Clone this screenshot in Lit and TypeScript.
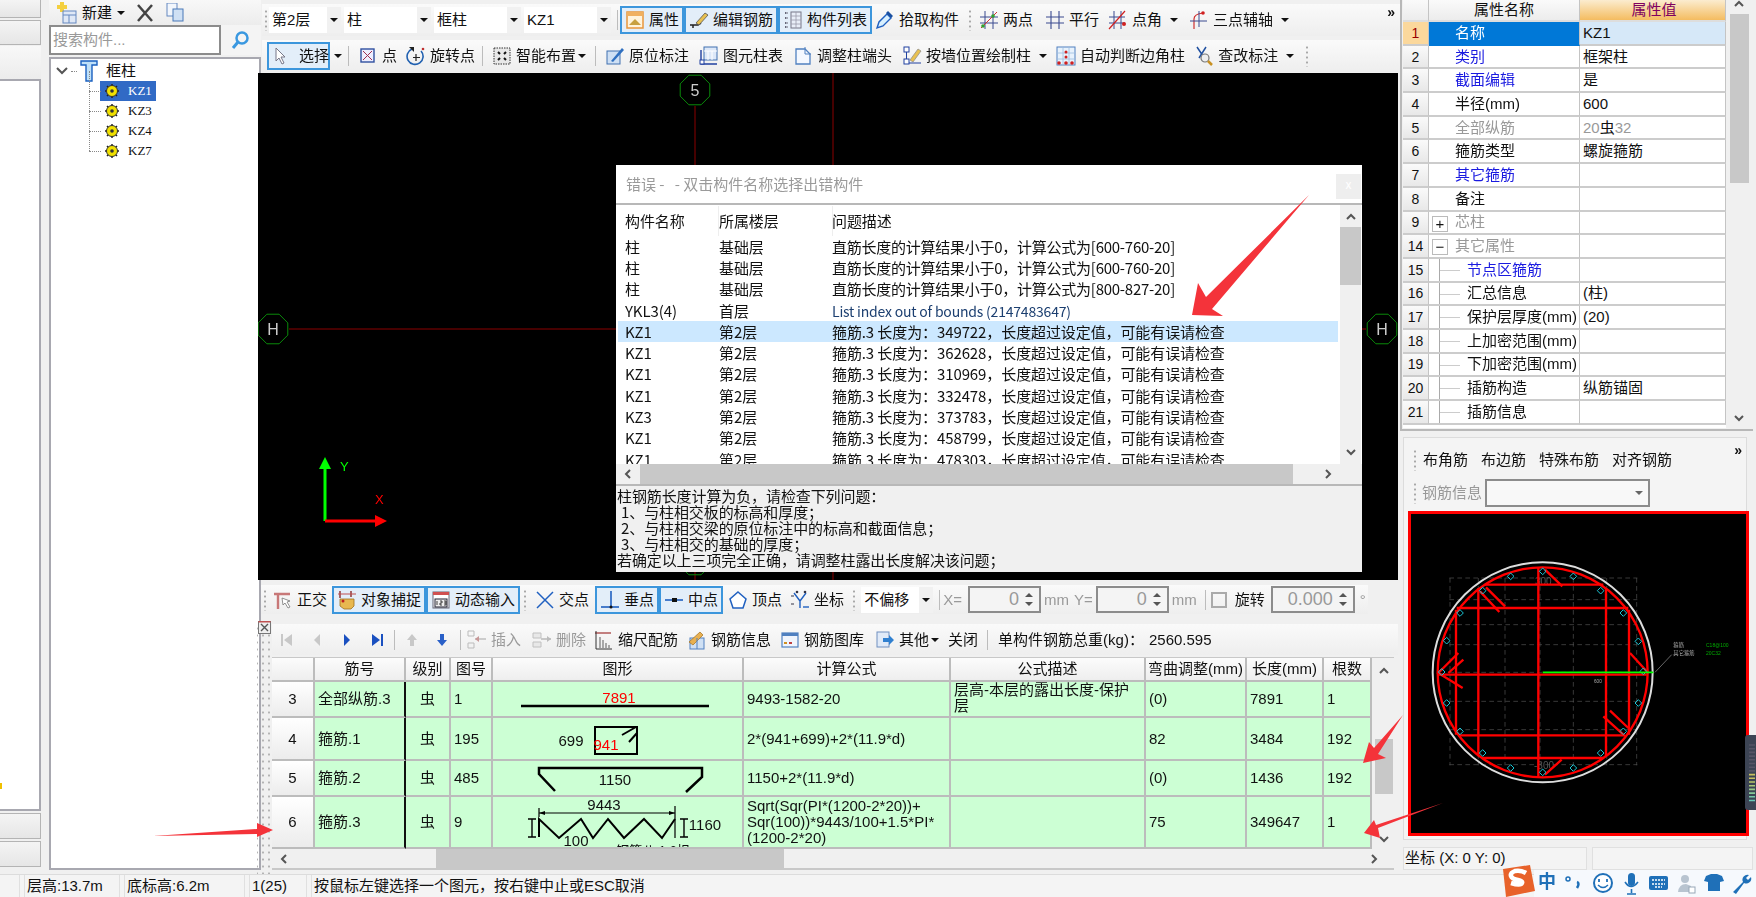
import { LitElement, html, css, svg, nothing } from "lit";
import { customElement } from "lit/decorators.js";

// toolbar icons, all on a 20x20 box
const ICONS: Record<string, unknown> = {
  attr: svg`<rect x="2" y="2" width="16" height="16" fill="#fff3dc" stroke="#e8963c" stroke-width="1.5"/><rect x="2" y="2" width="16" height="4" fill="#f0b060"/><path d="M4 15l6-6 6 6z" fill="#c8a040"/>`,
  edit: svg`<path d="M1 15h8l3-2" fill="none" stroke="#222" stroke-width="1.6"/><path d="M7 13L16 3l3 2-9 10z" fill="#e8c050" stroke="#555" stroke-width=".8"/><path d="M4 15v3" stroke="#222" stroke-width="1.5"/>`,
  list: svg`<path d="M2 3h3M2 8h3M2 13h3M2 17h3" stroke="#667" stroke-width="2" stroke-dasharray="1.5 1"/><rect x="8" y="2" width="10" height="16" fill="#e8eef8" stroke="#778"/><path d="M8 6h10M8 10h10M8 14h10M13 2v16" stroke="#99a" stroke-width=".8"/>`,
  pick: svg`<path d="M2 18l2-6 8-8 4 4-8 8z" fill="#d8f0ff" stroke="#2060c0" stroke-width="1.4"/><path d="M11 3l2-2 5 5-2 2z" fill="#1a50a0"/>`,
  twop: svg`<path d="M6 1v18M14 1v18M1 7h18M1 13h18" stroke="#3a4a90" stroke-width="1"/><path d="M2 18L18 2" stroke="#d03030"/><circle cx="4" cy="16" r="1.8" fill="#30a030"/><circle cx="14" cy="6" r="1.8" fill="#30a030"/>`,
  par: svg`<path d="M6 1v18M14 1v18M1 7h18M1 13h18" stroke="#3a4a90" stroke-width="1.1"/>`,
  angle: svg`<path d="M6 1v18M13 1v18M1 7h16M1 13h16" stroke="#3a4a90"/><path d="M1 19L17 1" stroke="#d02020" stroke-width="1.2"/><circle cx="16" cy="14" r="2" fill="#d02020"/>`,
  tri: svg`<path d="M5 19V9q0-5 9-6" fill="none" stroke="#d03030" stroke-width="1.2"/><path d="M10 1v16M1 11h17" stroke="#3a4a90"/><circle cx="14" cy="3" r="1.8" fill="#d02020"/>`,
  cursor: svg`<path d="M5 2v13l3-3 3 6 2-1-3-6h4z" fill="#fff" stroke="#778" stroke-width="1"/>`,
  point: svg`<rect x="3" y="3" width="13" height="13" fill="#eef" stroke="#3050a0" stroke-width="1.4"/><path d="M5 5l9 9M14 5l-9 9" stroke="#a03050"/>`,
  rot: svg`<path d="M6 3a8 8 0 1 0 9 2" fill="none" stroke="#2060b0" stroke-width="1.6"/><path d="M3 1h5v5z" fill="#222"/><path d="M10 8v7M7 11.500h7" stroke="#222" stroke-width="1.2"/><circle cx="17" cy="3" r="1.300" fill="#c03030"/>`,
  smart: svg`<rect x="2" y="2" width="16" height="16" fill="#e8e8e8" stroke="#333" stroke-dasharray="1.500 1"/><path d="M6 6l2 2M14 6l-2 2M6 14l2-2M14 14l-2-2" stroke="#111" stroke-width="2"/>`,
  mark: svg`<rect x="2" y="5" width="13" height="13" fill="#cfe0f4" stroke="#4070b0"/><path d="M6 15L17 2l2 2L8 16z" fill="#3070c0"/>`,
  table: svg`<rect x="5" y="1" width="13" height="13" fill="#dde8f8" stroke="#4070b0"/><path d="M5 5h13M9 5v9M13 5v9" stroke="#fff"/><path d="M2 4v14h16" fill="none" stroke="#2040a0" stroke-width="1.400"/><rect x="1" y="14" width="4" height="4" fill="#fff" stroke="#2040a0"/>`,
  adjust: svg`<path d="M3 3h9l5 5v10H3z" fill="#f4f8ff" stroke="#5080c0" stroke-width="1.300"/><path d="M12 1v7h6" fill="none" stroke="#5080c0"/>`,
  wall: svg`<rect x="2" y="1" width="5" height="5" fill="#fff" stroke="#2040a0"/><rect x="2" y="13" width="5" height="5" fill="#fff" stroke="#2040a0"/><path d="M4.500 6v7M7 17h12" stroke="#2040a0"/><path d="M8 14L16 3l3 2-8 11z" fill="#e8c050" stroke="#888" stroke-width=".7"/>`,
  auto: svg`<rect x="1" y="1" width="18" height="18" fill="#e8f2fc" stroke="#5080c0"/><path d="M7 1v18M13 1v18M1 7h18M1 13h18" stroke="#9dbde0" stroke-width=".8"/><circle cx="10" cy="6" r="1.500" fill="#d02020"/><circle cx="10" cy="11" r="1.500" fill="#d02020"/><circle cx="3" cy="17" r="1.800" fill="#d02020"/><circle cx="10" cy="17" r="1.800" fill="#d02020"/><circle cx="16" cy="17" r="1.800" fill="#d02020"/>`,
  check: svg`<path d="M3 1l6 9M12 1L5 12" stroke="#2050a0" stroke-width="1.500"/><circle cx="11" cy="12" r="4" fill="#eee" stroke="#777" stroke-width="1.200"/><path d="M14 15l4 4" stroke="#c89020" stroke-width="2.500"/>`,
  ortho: svg`<path d="M1 4h16M5 4v15" stroke="#c87878" stroke-width="2.400"/><path d="M9 8l8 3-3 1 3 5-2 1-3-5-2 2z" fill="#fff" stroke="#777" stroke-width=".8"/>`,
  snap: svg`<path d="M3 1v7M14 1v6" stroke="#8a2a2a" stroke-width="1.400"/><path d="M1 4l18 0" stroke="#c05050"/><path d="M3 9h14v7l-3 3H7l-4-3z" fill="#e8b850" stroke="#a07020" stroke-width=".8"/><circle cx="6" cy="11" r="1.500" fill="#c02020"/>`,
  dyn: svg`<rect x="2" y="2" width="16" height="16" fill="#fff" stroke="#667"/><rect x="2" y="2" width="16" height="3" fill="#d05050"/><rect x="4" y="9" width="12" height="8" fill="#eee" stroke="#223"/><path d="M6 11v4M9 11h2v2H9v2h2M13 11h2v4h-2M13 13h2" fill="none" stroke="#111" stroke-width=".8"/>`,
  cross: svg`<path d="M2 2l16 16M18 2L2 18" stroke="#2060c0" stroke-width="1.500"/>`,
  perp: svg`<path d="M1 17h18" stroke="#2060c0" stroke-width="1.600"/><path d="M11 1v16" stroke="#2060c0" stroke-width="1.600"/><circle cx="11" cy="17" r="1.500" fill="#111"/>`,
  mid: svg`<path d="M1 10h18" stroke="#2060c0" stroke-width="1.600"/><rect x="8" y="8" width="5" height="4" fill="#111"/>`,
  vertex: svg`<path d="M10 2l8 7-3 9H5L2 9z" fill="#fff" stroke="#2060c0" stroke-width="1.500"/>`,
  coord: svg`<path d="M4 3l6 8 6-8M10 11v7" fill="none" stroke="#2060c0" stroke-width="1.400"/><circle cx="7" cy="2" r="1.300" fill="#334"/><circle cx="15" cy="2" r="1.300" fill="#334"/><path d="M1 6h3M1 14h3" stroke="#334"/><path d="M13 17h6" stroke="#2060c0" stroke-width="1.400"/>`,
  ins: svg`<path d="M1 1h6v5H1zM1 13h6v5H1z" fill="none" stroke="#bbb"/><path d="M8 9h11" stroke="#bbb" stroke-width="1.400"/><path d="M8 9l4-3v6z" fill="#c89898"/>`,
  del: svg`<path d="M1 3h8v5H1zM1 12h8v5H1z" fill="#e8e8e8" stroke="#c0c0c0"/><path d="M9 9h10" stroke="#bbb" stroke-width="1.600"/><path d="M19 9l-4-3v6z" fill="#bbb"/>`,
  scale: svg`<path d="M1 3h16" stroke="#a03030" stroke-width="1.200"/><path d="M2 1v18h16" fill="none" stroke="#333"/><path d="M6 7v11M9 10v8M12 13v5M15 15v3" stroke="#888" stroke-width="1.400"/>`,
  info: svg`<rect x="3" y="8" width="14" height="11" fill="#cfe0f4" stroke="#5080c0"/><path d="M2 12L13 2l3 3L6 15z" fill="#e8b050" stroke="#a07020" stroke-width=".7"/><path d="M10 8v11" stroke="#5080c0"/>`,
  lib: svg`<rect x="2" y="3" width="16" height="14" fill="#f0f4fc" stroke="#5080c0" stroke-width="1.200"/><rect x="2" y="3" width="16" height="3" fill="#5080c0"/><path d="M4 13h3" stroke="#d09020" stroke-width="2"/><path d="M9 13h3" stroke="#c04040" stroke-width="2"/>`,
  other: svg`<rect x="2" y="2" width="12" height="15" fill="#e0eaf8" stroke="#7090c0"/><path d="M8 8h6V5l5 5-5 5v-3H8z" fill="#3080d0"/>`,
};

const icon = (name: string) =>
  html`<svg class="ic" width="20" height="20" viewBox="0 0 20 20">${ICONS[name]}</svg>`;

const chevron = (dir: "up" | "down" | "left" | "right") => {
  const d = {
    up: "M2 8l4-4 4 4",
    down: "M2 4l4 4 4-4",
    left: "M8 2L4 6l4 4",
    right: "M4 2l4 4-4 4",
  }[dir];
  return html`<svg class="chev" width="12" height="12" viewBox="0 0 12 12">
    <path d=${d} fill="none" stroke="#555" stroke-width="2" />
  </svg>`;
};

type Tool = { label: string; ic?: string; on?: boolean; arrow?: boolean; off?: boolean; cls?: string };

const tool = (t: Tool) => html`
  <span class="tool ${t.on ? "on" : ""} ${t.off ? "off" : ""} ${t.cls ?? ""}">
    ${t.ic ? icon(t.ic) : nothing}<span>${t.label}</span>
    ${t.arrow ? html`<i class="caret"></i>` : nothing}
  </span>
`;

const ROW1_A: Tool[] = [
  { label: "属性", ic: "attr", on: true },
  { label: "编辑钢筋", ic: "edit", on: true },
  { label: "构件列表", ic: "list", on: true },
  { label: "拾取构件", ic: "pick" },
];
const ROW1_B: Tool[] = [
  { label: "两点", ic: "twop", cls: "mr6" },
  { label: "平行", ic: "par", cls: "mr3" },
  { label: "点角", ic: "angle", arrow: true, cls: "mr5" },
  { label: "三点辅轴", ic: "tri", arrow: true },
];
const ROW2_B: Tool[] = [
  { label: "原位标注", ic: "mark", cls: "mr4" },
  { label: "图元柱表", ic: "table", cls: "mr4" },
  { label: "调整柱端头", ic: "adjust", cls: "mr4" },
  { label: "按墙位置绘制柱", ic: "wall", arrow: true, cls: "mr3" },
  { label: "自动判断边角柱", ic: "auto", cls: "mr3" },
  { label: "查改标注", ic: "check", arrow: true },
];

const DIALOG_TOP = [
  ["柱", "基础层", "直筋长度的计算结果小于0，计算公式为[600-760-20]"],
  ["柱", "基础层", "直筋长度的计算结果小于0，计算公式为[600-760-20]"],
  ["柱", "基础层", "直筋长度的计算结果小于0，计算公式为[800-827-20]"],
  ["YKL3(4)", "首层", "List index out of bounds (2147483647)"],
];
const DIALOG_LEN: [string, string][] = [
  ["KZ1", "349722"],
  ["KZ1", "362628"],
  ["KZ1", "310969"],
  ["KZ1", "332478"],
  ["KZ3", "373783"],
  ["KZ1", "458799"],
  ["KZ1", "478303"],
];

type Prop = { n: number; name: string; val?: string; kind?: string; sub?: boolean; expander?: string };
const PROPS: Prop[] = [
  { n: 1, name: "名称", val: "KZ1" },
  { n: 2, name: "类别", val: "框架柱", kind: "blue" },
  { n: 3, name: "截面编辑", val: "是", kind: "blue" },
  { n: 4, name: "半径(mm)", val: "600" },
  { n: 5, name: "全部纵筋", val: "20虫32", kind: "grey" },
  { n: 6, name: "箍筋类型", val: "螺旋箍筋" },
  { n: 7, name: "其它箍筋", kind: "blue" },
  { n: 8, name: "备注" },
  { n: 9, name: "芯柱", kind: "grey", expander: "+" },
  { n: 14, name: "其它属性", kind: "grey", expander: "−" },
  { n: 15, name: "节点区箍筋", kind: "blue", sub: true },
  { n: 16, name: "汇总信息", val: "(柱)", sub: true },
  { n: 17, name: "保护层厚度(mm)", val: "(20)", sub: true },
  { n: 18, name: "上加密范围(mm)", sub: true },
  { n: 19, name: "下加密范围(mm)", sub: true },
  { n: 20, name: "插筋构造", val: "纵筋锚固", sub: true },
  { n: 21, name: "插筋信息", sub: true },
];

const HEADS = ["", "筋号", "级别", "图号", "图形", "计算公式", "公式描述", "弯曲调整(mm)", "长度(mm)", "根数"];

const shape3 = svg`<text x="126" y="21" class="red" text-anchor="middle">7891</text><path d="M28 24h188" stroke="#000" stroke-width="2.500"/>`;
const shape4 = svg`<text x="78" y="28" text-anchor="middle">699</text><rect x="102" y="9" width="42" height="27" fill="none" stroke="#000" stroke-width="2"/><path d="M129 17l14-8M136 24l8-9" stroke="#000" stroke-width="2"/><text x="113" y="32" class="red" text-anchor="middle">941</text>`;
const shape5 = svg`<path d="M62 30L46 13V7h163v9l-16 15" fill="none" stroke="#000" stroke-width="2.500"/><text x="122" y="24" text-anchor="middle">1150</text>`;
const shape6 = svg`<text x="111" y="13" text-anchor="middle">9443</text>
  <path d="M46 16h136M46 11v9M182 9v32" stroke="#000" stroke-width="1.200"/>
  <path d="M46 16l6-2v4zM182 16l-6-2v4z" fill="#000"/>
  <path d="M46 40V22l20 19 22-19 12 19 15-19 16 19 20-19 18 19 13-19" fill="none" stroke="#000" stroke-width="2"/>
  <path d="M39 22v18M35 22h8M35 40h8M191 22v18M187 22h8M187 40h8" stroke="#000" stroke-width="1.400"/>
  <text x="212" y="33" text-anchor="middle">1160</text>
  <text x="83" y="49" text-anchor="middle">100</text>
  <text x="160" y="58" text-anchor="middle" class="small">钢筋八 1.6扣</text>`;

const ROWS = [
  { n: "3", no: "全部纵筋.3", fig: "1", shape: shape3, calc: ["9493-1582-20"], desc: "层高-本层的露出长度-保护层", bend: "(0)", len: "7891", cnt: "1" },
  { n: "4", no: "箍筋.1", fig: "195", shape: shape4, calc: ["2*(941+699)+2*(11.9*d)"], desc: "", bend: "82", len: "3484", cnt: "192" },
  { n: "5", no: "箍筋.2", fig: "485", shape: shape5, calc: ["1150+2*(11.9*d)"], desc: "", bend: "(0)", len: "1436", cnt: "192" },
  { n: "6", no: "箍筋.3", fig: "9", shape: shape6, calc: ["Sqrt(Sqr(PI*(1200-2*20))+", "Sqr(100))*9443/100+1.5*PI*", "(1200-2*20)"], desc: "", bend: "75", len: "349647", cnt: "1" },
];

const DIAMONDS = [
  [458, 430], [550, 445], [632, 488], [700, 555], [745, 640], [760, 730], [745, 825], [700, 910], [632, 975], [550, 1020],
  [458, 1033], [362, 1020], [278, 975], [210, 910], [170, 825], [155, 732], [170, 638], [210, 555], [278, 488], [362, 445],
];

const GADGET_BARS = ["#556", "#556", "#556", "#556", "#556", "#556", "#556", "#556", "#c8c060", "#c8c060", "#b8c868", "#a8c878", "#98c888", "#88c898", "#78c8a8", "#68c8b8"];

@customElement("app-root")
export class AppRoot extends LitElement {
  static styles = css`
    :host {
      display: block;
      position: relative;
      width: 1756px;
      height: 897px;
      overflow: hidden;
      background: #f0f0f0;
      color: #111;
      font: 15px/20px "Liberation Sans", "Noto Sans CJK SC", sans-serif;
      white-space: nowrap;
    }
    .root {
      height: 100%;
      display: flex;
      flex-direction: column;
      filter: blur(0.45px);
    }
    .main {
      height: 874px;
      display: flex;
    }
    svg {
      display: block;
      flex: none;
    }
    .mr1 { margin-right: 1px; }
    .mr2 { margin-right: 2px; }
    .mr3 { margin-right: 3px; }
    .mr4 { margin-right: 4px; }
    .mr5 { margin-right: 5px; }
    .mr6 { margin-right: 6px; }
    .mr8 { margin-right: 8px; }
    .ml2 { margin-left: 2px; }
    .ml3 { margin-left: 3px; }
    .ml4 { margin-left: 4px; }
    .ml5 { margin-left: 5px; }
    .ml6 { margin-left: 6px; }
    .ml8 { margin-left: 8px; }

    /* left strip */
    .left {
      width: 41px;
      display: flex;
      flex-direction: column;
      flex: none;
    }
    .strip-btn {
      background: linear-gradient(#f4f4f4, #e6e6e6);
      border: 1px solid #b4b4b4;
      border-left: 0;
      box-sizing: border-box;
      height: 26px;
      margin-bottom: 2px;
      flex: none;
    }
    .strip-btn.top {
      height: 18px;
      border-top: 0;
    }
    .strip-btn.mid {
      height: 25px;
    }
    .strip-fill {
      height: 33px;
      flex: none;
      background: linear-gradient(#f8f8f8, #ececec);
      margin-top: -1px;
    }
    .strip-white {
      height: 732px;
      margin-bottom: 2px;
      background: #fff;
      border: 2px solid #a8a8b0;
      border-left: 0;
      box-sizing: border-box;
      position: relative;
      flex: none;
    }
    .tick {
      position: absolute;
      left: 0;
      top: 702px;
      width: 2px;
      height: 6px;
      background: #f0c000;
    }

    /* component tree */
    .treecol {
      width: 212px;
      margin-left: 8px;
      flex: none;
      display: flex;
      flex-direction: column;
    }
    .treebar {
      height: 25px;
      display: flex;
      align-items: center;
      padding-left: 6px;
      gap: 5px;
      background: linear-gradient(#f8f8f8, #ececec);
    }
    .treebar .caret {
      margin-left: 0;
    }
    .search {
      height: 30px;
      display: flex;
      margin-bottom: 2px;
    }
    .searchbox {
      width: 172px;
      border: 2px solid #8c8c8c;
      background: #fff;
      color: #999;
      padding: 3px 2px;
      box-sizing: border-box;
    }
    .go {
      flex: 1;
      display: flex;
      align-items: center;
      justify-content: center;
      background: #f4f4f4;
    }
    .tree {
      height: 813px;
      background: #fff;
      border: 2px solid #a8a8b0;
      box-sizing: border-box;
      padding: 2px 0 0 5px;
      position: relative;
    }
    .tree-head {
      display: flex;
      align-items: center;
      height: 20px;
      gap: 3px;
    }
    .dots {
      width: 6px;
      border-top: 1px dotted #888;
    }
    .tree-head .name {
      margin-left: 5px;
    }
    .tree-item {
      display: flex;
      align-items: center;
      height: 20px;
      font: 13px/20px "Liberation Serif", serif;
      margin-left: 33px;
      padding-left: 20px;
      position: relative;
    }
    .tree-item::before {
      content: "";
      position: absolute;
      left: 0;
      top: -10px;
      height: 20px;
      border-left: 1px dotted #888;
    }
    .tree-item::after {
      content: "";
      position: absolute;
      left: 0;
      width: 12px;
      top: 10px;
      border-top: 1px dotted #888;
    }
    .leaf {
      display: flex;
      align-items: center;
      gap: 8px;
      height: 20px;
      width: 56px;
      margin-left: -9px;
      padding-left: 4px;
      box-sizing: border-box;
    }
    .leaf.sel {
      background: #316ac5;
      color: #fff;
    }

    /* centre column */
    .centre {
      width: 1143px;
      flex: none;
      margin-left: -4px;
      display: flex;
      flex-direction: column;
    }
    .bars {
      height: 73px;
      padding-left: 5px;
      position: relative;
    }
    .bar {
      display: flex;
      align-items: center;
      height: 32px;
      background: linear-gradient(#fafafa, #eeeeee);
    }
    .bar.one {
      margin-top: 4px;
    }
    .bar.two {
      margin-top: 4px;
      padding-left: 5px;
    }
    .grip {
      width: 4px;
      height: 22px;
      flex: none;
      background: radial-gradient(circle, #a8a8a8 1px, transparent 1.2px) 0 0 / 4px 5px;
    }
    .sep {
      width: 1px;
      height: 20px;
      background: #bcbcbc;
      flex: none;
    }
    .tool {
      display: inline-flex;
      align-items: center;
      gap: 4px;
      height: 28px;
      padding: 0 3px;
      box-sizing: border-box;
      flex: none;
    }
    .tool.on {
      background: #e3eef9;
      border: 2px solid #3c96dc;
      padding: 0 3px;
    }
    .tool.sel-wide {
      width: 63px;
      gap: 8px;
      padding: 0 2px;
    }
    .tool.off {
      color: #9a9a9a;
    }
    .caret {
      width: 0;
      height: 0;
      margin-left: 4px;
      border-left: 4px solid transparent;
      border-right: 4px solid transparent;
      border-top: 4px solid #111;
      flex: none;
    }
    .tool.tight .caret {
      margin-left: -2px;
    }
    .dd {
      width: 87px;
      height: 26px;
      background: #fff;
      display: flex;
      align-items: center;
      padding-left: 3px;
      box-sizing: border-box;
      margin-left: 3px;
      position: relative;
      flex: none;
    }
    .dd.s {
      width: 72px;
      margin-left: 0;
    }
    .dd .caret {
      position: absolute;
      right: 3px;
      top: 11px;
      margin: 0;
      z-index: 1;
    }
    .dd::after {
      content: "";
      position: absolute;
      right: 0;
      top: 0;
      bottom: 0;
      width: 14px;
      background: #f1f1f1;
      z-index: 0;
    }
    .more {
      position: absolute;
      right: 5px;
      top: 2px;
      font: bold 14px/20px "Liberation Sans", sans-serif;
    }

    /* main drawing */
    .canvas {
      height: 507px;
      width: 1140px;
      margin-left: 1px;
      background: #000;
      position: relative;
      flex: none;
    }
    .canvas > svg {
      position: absolute;
      inset: 0;
    }

    /* error dialog on the canvas */
    .dialog {
      position: absolute;
      left: 358px;
      top: 92px;
      width: 746px;
      height: 407px;
      background: #fff;
      display: flex;
      flex-direction: column;
      box-sizing: border-box;
    }
    .dlg-title {
      height: 38px;
      flex: none;
      color: #9a9a9a;
      display: flex;
      align-items: center;
      padding-left: 10px;
      border-bottom: 2px solid #b8b8b8;
      position: relative;
      font-family: "Noto Sans CJK SC", sans-serif;
      white-space: pre;
    }
    .dlg-x {
      position: absolute;
      right: 1px;
      top: 9px;
      width: 25px;
      height: 25px;
      background: #eeeeee;
      color: #fff;
      text-align: center;
      font-size: 12px;
    }
    .dlg-body {
      flex: none;
      height: 259px;
      display: flex;
    }
    .dlg-list {
      width: 724px;
      overflow: hidden;
      padding-left: 2px;
      box-sizing: border-box;
    }
    .dlg-row {
      display: grid;
      grid-template-columns: 94px 114px 1fr;
      height: 21.3px;
      align-items: center;
      padding-left: 7px;
      font-family: "Noto Sans CJK SC", "Liberation Sans", sans-serif;
      letter-spacing: -0.1px;
    }
    .dlg-row.head {
      height: 31px;
    }
    .dlg-row.sel {
      background: #cce8ff;
      margin-right: 2px;
    }
    .dlg-row.dense > :nth-child(3) {
      letter-spacing: -0.25px;
    }
    .dlg-row.small > :nth-child(3) {
      color: #1c3f70;
      font-size: 14px;
      letter-spacing: -0.2px;
    }
    .dlg-row > :nth-child(3) {
      margin-left: -1px;
    }
    .headcell {
      border-right: 1px solid #eee;
      height: 30px;
      line-height: 30px;
    }
    .vscroll {
      width: 21px;
      flex: none;
      background: #f0f0f0;
      display: flex;
      flex-direction: column;
      align-items: center;
      position: relative;
      padding-top: 6px;
      box-sizing: border-box;
    }
    .vscroll .thumb {
      width: 100%;
      height: 58px;
      background: #c8c8c8;
      margin-top: 4px;
    }
    .vscroll .chev:last-child {
      position: absolute;
      bottom: 6px;
    }
    .dlg-h {
      height: 20px;
      flex: none;
      background: #f0f0f0;
      display: flex;
      align-items: center;
      padding: 0 6px;
      gap: 6px;
    }
    .dlg-h .thumb {
      width: 653px;
      height: 100%;
      background: #c8c8c8;
    }
    .dlg-h .chev:last-child {
      margin-left: 23px;
    }
    .dlg-desc {
      flex: 1;
      background: #f0f0f0;
      border-top: 2px solid #b8b8b8;
      padding: 2px 0 0 1px;
      font: 15px/16px "Noto Sans CJK SC", sans-serif;
      overflow: hidden;
      letter-spacing: -0.1px;
    }
    .dlg-desc div:nth-child(n + 2):nth-child(-n + 4) {
      padding-left: 4px;
    }

    /* snap toolbar */
    .snapbar {
      height: 29px;
      margin: 5px 0 0 3px;
      display: flex;
      align-items: center;
      background: linear-gradient(#fafafa, #eeeeee);
      font-size: 15px;
      width: 1108px;
    }
    .spin {
      width: 73px;
      height: 27px;
      border: 2px solid #8c8c8c;
      box-sizing: border-box;
      color: #999;
      font-size: 18px;
      text-align: right;
      padding: 1px 20px 0 0;
      position: relative;
      background: #f4f4f4;
      flex: none;
    }
    .spin.w {
      width: 84px;
    }
    .spin::after {
      content: "";
      position: absolute;
      right: 6px;
      top: 5px;
      border-left: 4px solid transparent;
      border-right: 4px solid transparent;
      border-bottom: 4px solid #555;
    }
    .spin::before {
      content: "";
      position: absolute;
      right: 6px;
      bottom: 5px;
      border-left: 4px solid transparent;
      border-right: 4px solid transparent;
      border-top: 4px solid #555;
    }
    .muted {
      color: #9a9a9a;
      flex: none;
    }
    .cb {
      width: 12px;
      height: 12px;
      border: 2px solid #aaa;
      flex: none;
    }

    /* rebar table */
    .lower {
      flex: 1;
      display: flex;
      margin-top: 10px;
      min-height: 0;
    }
    .gutter {
      width: 15px;
      flex: none;
      position: relative;
      background: radial-gradient(circle, #b4b4b4 1px, transparent 1.2px) 3px 15px / 6px 7px;
    }
    .closer {
      position: absolute;
      left: 1px;
      top: -3px;
    }
    .grid-wrap {
      width: 1126px;
      flex: none;
      display: flex;
      flex-direction: column;
    }
    .tbar {
      height: 31px;
      display: flex;
      align-items: center;
      background: linear-gradient(#fafafa, #eeeeee);
      flex: none;
    }
    .nav {
      width: 30px;
      height: 20px;
      display: flex;
      align-items: center;
      justify-content: center;
      flex: none;
    }
    .table-box {
      margin-top: 2px;
      flex: none;
      display: flex;
      height: 191px;
      border-top: 1px solid #c8c8c8;
      width: 1122px;
    }
    .rb {
      display: grid;
      grid-template-columns: 43px 91px 45px 42px 251px 207px 195px 101px 77px 48px;
      grid-template-rows: 24px 36px 43px 36px 52px;
      width: 1100px;
      height: 191px;
      overflow: hidden;
      flex: none;
      background: #ccffd4;
    }
    .rb > div {
      border-right: 2px solid #bcbcbc;
      border-bottom: 2px solid #bcbcbc;
      box-sizing: border-box;
      padding-left: 3px;
      display: flex;
      align-items: center;
      overflow: hidden;
      font-size: 15px;
      min-width: 0;
    }
    .rb .hd {
      background: linear-gradient(#fcfcfc, #eeeeee);
      justify-content: center;
      padding: 0;
    }
    .rb .idx {
      background: linear-gradient(#fff, #ececec);
      justify-content: center;
      padding: 0;
    }
    .rb .no {
      border-right: 2px solid #111;
    }
    .rb .sym {
      justify-content: center;
      padding: 0;
    }
    .rb .shape {
      padding: 0;
      align-items: flex-start;
    }
    .rb .wrap {
      white-space: normal;
      line-height: 16px;
      padding-right: 4px;
      display: block;
      align-self: stretch;
    }
    .rb .wrap.mid-line {
      display: flex;
      flex-direction: column;
      justify-content: center;
      align-items: flex-start;
    }
    .rb text {
      font: 15px "Liberation Sans", "Noto Sans CJK SC", sans-serif;
      fill: #111;
    }
    .rb text.red {
      fill: #f00;
    }
    .rb text.small {
      font-size: 13px;
    }
    .tb-v {
      width: 20px;
      flex: none;
      margin-left: 2px;
      position: relative;
      background: #f0f0f0;
    }
    .tb-v .up {
      position: absolute;
      left: 4px;
      top: 7px;
    }
    .tb-v .dn {
      position: absolute;
      left: 4px;
      top: 175px;
    }
    .tb-v .thumb {
      position: absolute;
      left: 1px;
      width: 18px;
      top: 81px;
      height: 55px;
      background: #c8c8c8;
    }
    .tb-h {
      height: 21px;
      flex: none;
      width: 1122px;
      display: flex;
      align-items: center;
      background: #f0f0f0;
      padding: 0 6px;
      box-sizing: border-box;
      position: relative;
      border-bottom: 2px solid #c8c8c8;
    }
    .tb-h .thumb {
      margin-left: 146px;
      width: 348px;
      height: 19px;
      background: #c8c8c8;
    }
    .tb-h .chev:last-child {
      margin-left: auto;
      margin-right: 8px;
    }

    /* right column */
    .right {
      width: 353px;
      flex: none;
      display: flex;
      flex-direction: column;
    }
    .props {
      height: 431px;
      width: 353px;
      display: flex;
      border-bottom: 2px solid #b8b8b8;
      border-left: 2px solid #b8b8b8;
      box-sizing: border-box;
      padding-left: 1px;
      background: #f0f0f0;
      flex: none;
    }
    .pg {
      width: 323px;
      flex: none;
      display: grid;
      grid-template-columns: 26px 151px 146px;
      grid-template-rows: 22px;
      grid-auto-rows: 23.7px;
      overflow: hidden;
      background: #fff;
      height: 428px;
    }
    .pg > div {
      border-right: 1px solid #c4c4c4;
      border-bottom: 2px solid #cccccc;
      box-sizing: border-box;
      display: flex;
      align-items: center;
      min-width: 0;
      overflow: hidden;
    }
    .pg .hd {
      justify-content: center;
      background: linear-gradient(#fafafa, #ececec);
      border-bottom: 2px solid #ddd;
      line-height: 18px;
    }
    .pg .hd.val {
      background: linear-gradient(#fbeccf, #f4bc60);
      color: #800060;
    }
    .pg .idx {
      background: linear-gradient(#fafafa, #e8e8e8);
      justify-content: center;
      font-size: 14px;
    }
    .pg .idx.cur {
      background: #fbd89c;
      color: #900;
    }
    .pg .nm {
      padding-left: 26px;
      position: relative;
    }
    .pg .nm.cur {
      background: #0078d7;
      color: #fff;
      border-bottom-color: #0078d7;
    }
    .pg .val {
      padding-left: 3px;
    }
    .pg .val.cur {
      background: #d6e8f8;
    }
    .blue {
      color: #1a1ae0;
    }
    .grey {
      color: #999;
    }
    .dark {
      color: #111;
    }
    .pg .nm.sub {
      padding-left: 38px;
    }
    .pg .nm.sub::before {
      content: "";
      position: absolute;
      left: 10px;
      top: -2px;
      bottom: -2px;
      border-left: 1px solid #aaa;
    }
    .pg .nm.sub::after {
      content: "";
      position: absolute;
      left: 11px;
      width: 20px;
      top: 11px;
      border-top: 1px solid #ccc;
    }
    .expander {
      position: absolute;
      left: 3px;
      top: 4px;
      width: 14px;
      height: 14px;
      border: 1px solid #bbb;
      line-height: 13px;
      text-align: center;
      color: #111;
      background: #fff;
    }
    .props-scroll {
      width: 20px;
      margin-left: 4px;
      position: relative;
      flex: none;
    }
    .props-scroll .thumb {
      position: absolute;
      left: 0;
      top: 14px;
      width: 19px;
      height: 169px;
      background: #c8c8c8;
    }
    .props-scroll .up {
      position: absolute;
      left: 3px;
      top: -2px;
    }
    .props-scroll .dn {
      position: absolute;
      left: 3px;
      top: 412px;
    }

    .rebar {
      margin: 6px 6px 0 3px;
      height: 403px;
      flex: none;
      border: 1px solid #dcdcdc;
      background: #f4f4f4;
      box-sizing: border-box;
      padding: 5px 1px 0 4px;
      position: relative;
    }
    .rebar .more {
      top: 2px;
      right: 4px;
    }
    .rebar-row {
      display: flex;
      align-items: center;
      height: 33px;
    }
    .rebar-row.tabs {
      gap: 13px;
    }
    .rebar-row.tabs .grip {
      margin: 0 -7px 0 5px;
    }
    .rebar-row .grip {
      margin: 0 5px;
    }
    .rebar-row.info {
      margin-bottom: 2px;
    }
    .picker {
      width: 165px;
      height: 28px;
      border: 2px solid #8c8c8c;
      box-sizing: border-box;
      background: #f8f8f8;
      margin-left: 3px;
      position: relative;
    }
    .picker .caret {
      position: absolute;
      right: 5px;
      top: 10px;
      margin: 0;
      border-top-color: #666;
    }
    .rebar-view {
      border: 3px solid #f00;
      background: #000;
      width: 341px;
      height: 325px;
      box-sizing: border-box;
      overflow: hidden;
    }
    .coords {
      margin: 7px 0 0 3px;
      height: 23px;
      display: flex;
      gap: 5px;
      flex: none;
    }
    .coords div {
      border: 1px solid #e0e0e0;
      box-sizing: border-box;
      background: #f4f4f4;
      height: 23px;
      padding-left: 1px;
    }
    .coords .c1 {
      width: 184px;
    }
    .coords .c2 {
      flex: 1;
    }

    /* status bar */
    .status {
      height: 23px;
      display: flex;
      gap: 4px;
      background: #f4f4f4;
      border-top: 1px solid #dcdcdc;
      box-sizing: border-box;
      font-size: 15px;
      line-height: 22px;
    }
    .status span {
      border-left: 1px solid #e0e0e0;
      border-right: 1px solid #e0e0e0;
      padding-left: 2px;
      box-sizing: border-box;
      height: 22px;
      flex: none;
    }
    .status .c0 { width: 20px; border-left: 0; }
    .status .c1 { width: 96px; }
    .status .c2 { width: 121px; }
    .status .c3 { width: 58px; }
    .status .c4 { flex: 1; border-right: 0; }

    /* things floating above the window */
    .arrows {
      position: absolute;
      inset: 0;
      pointer-events: none;
    }
    .gadget {
      position: absolute;
      right: 0;
      top: 735px;
      width: 11px;
      height: 75px;
      background: #3c4454;
      border-radius: 3px 0 0 3px;
    }
    .tray {
      position: absolute;
      right: 0;
      bottom: 0;
      width: 256px;
      height: 32px;
    }
  `;

  private bars() {
    return html`<div class="bars">
      <div class="bar one">
        <span class="grip ml2 mr1"></span>
        <span class="dd s">第2层<i class="caret"></i></span>
        <span class="dd">柱<i class="caret"></i></span>
        <span class="dd">框柱<i class="caret"></i></span>
        <span class="dd">KZ1<i class="caret"></i></span>
        <span class="sep ml6 mr2"></span>
        ${ROW1_A.map(tool)}
        <span class="grip ml6 mr4"></span>
        ${ROW1_B.map(tool)}
        <span class="more">»</span>
      </div>
      <div class="bar two">
        <span class="tool on sel-wide">${icon("cursor")}<span>选择</span></span>
        <i class="caret"></i>
        <span class="sep ml6 mr6"></span>
        ${tool({ label: "点", ic: "point", cls: "mr3" })} ${tool({ label: "旋转点", ic: "rot" })}
        <span class="sep ml4 mr6"></span>
        ${tool({ label: "智能布置", ic: "smart", arrow: true, cls: "tight" })}
        <span class="sep ml6 mr6"></span>
        ${ROW2_B.map(tool)}
        <span class="grip ml8"></span>
      </div>
    </div>`;
  }

  private plan() {
    const octa = (cx: number, cy: number, label: string) => {
      const pts = Array.from({ length: 8 }, (_, i) => {
        const a = Math.PI / 8 + (i * Math.PI) / 4;
        return `${cx + 16 * Math.cos(a)},${cy + 16 * Math.sin(a)}`;
      }).join(" ");
      return svg`<polygon points=${pts} fill="none" stroke="#0a8a0a"/>
        <text x=${cx} y=${cy + 6} text-anchor="middle" fill="#ccc" font-size="16" font-family="Liberation Sans">${label}</text>`;
    };
    return html`<svg width="1140" height="507" viewBox="0 0 1140 507">
      <path d="M437 33V507M575 0V507M31 256H1108" stroke="#8b0000" />
      ${octa(437, 17, "5")} ${octa(15, 256, "H")} ${octa(1124, 256, "H")} ${octa(437, 487, "")}
      <path d="M67 448V392" stroke="#0f0" stroke-width="3" />
      <path d="M67 384l-6 12h12z" fill="#0f0" />
      <path d="M67 448H122" stroke="#f00" stroke-width="3" />
      <path d="M129 448l-12-6v12z" fill="#f00" />
      <text x="82" y="398" fill="#0f0" font-size="13" font-family="Liberation Sans">Y</text>
      <text x="117" y="431" fill="#f00" font-size="13" font-family="Liberation Sans">X</text>
    </svg>`;
  }

  private dialog() {
    return html`<div class="dialog">
      <div class="dlg-title">错误 -   - 双击构件名称选择出错构件<span class="dlg-x">x</span></div>
      <div class="dlg-body">
        <div class="dlg-list">
          <div class="dlg-row head">
            <span class="headcell">构件名称</span><span class="headcell">所属楼层</span><span>问题描述</span>
          </div>
          ${DIALOG_TOP.map(
            (r, i) => html`<div class="dlg-row ${i === 3 ? "small" : "dense"}">
              <span>${r[0]}</span><span>${r[1]}</span><span>${r[2]}</span>
            </div>`
          )}
          ${DIALOG_LEN.map(
            (r, i) => html`<div class="dlg-row ${i === 0 ? "sel" : ""}">
              <span>${r[0]}</span><span>第2层</span
              ><span>箍筋.3 长度为：${r[1]}，长度超过设定值，可能有误请检查</span>
            </div>`
          )}
        </div>
        <div class="vscroll">${chevron("up")}<div class="thumb"></div>${chevron("down")}</div>
      </div>
      <div class="dlg-h">
        ${chevron("left")}
        <div class="thumb"></div>
        ${chevron("right")}
      </div>
      <div class="dlg-desc">
        <div>柱钢筋长度计算为负，请检查下列问题：</div>
        <div>1、与柱相交板的标高和厚度；</div>
        <div>2、与柱相交梁的原位标注中的标高和截面信息；</div>
        <div>3、与柱相交的基础的厚度；</div>
        <div>若确定以上三项完全正确，请调整柱露出长度解决该问题；</div>
      </div>
    </div>`;
  }

  private snapbar() {
    return html`<div class="snapbar">
      <span class="grip ml3 mr3"></span>
      ${tool({ label: "正交", ic: "ortho", cls: "mr2" })}
      ${tool({ label: "对象捕捉", ic: "snap", on: true })}
      ${tool({ label: "动态输入", ic: "dyn", on: true })}
      <span class="grip ml3 mr5"></span>
      ${tool({ label: "交点", ic: "cross", cls: "mr3" })}
      ${tool({ label: "垂点", ic: "perp", on: true })}
      ${tool({ label: "中点", ic: "mid", on: true, cls: "mr2" })}
      ${tool({ label: "顶点", ic: "vertex", cls: "mr2" })}
      ${tool({ label: "坐标", ic: "coord" })}
      <span class="grip ml5 mr5"></span>
      <span class="dd s">不偏移<i class="caret"></i></span>
      <span class="sep ml6 mr3"></span>
      <span class="muted mr6">X=</span>
      <span class="spin">0</span>
      <span class="muted ml3 mr3">mm</span>
      <span class="muted ml2 mr3">Y=</span>
      <span class="spin">0</span>
      <span class="muted ml3 mr3">mm</span>
      <span class="sep ml5 mr5"></span>
      <span class="cb mr8"></span>
      <span class="mr6">旋转</span>
      <span class="spin w">0.000</span>
      <span class="muted ml5">°</span>
    </div>`;
  }

  private tablebar() {
    const tri = (p: string, c: string) =>
      html`<span class="nav"
        ><svg width="16" height="16" viewBox="0 0 16 16"><path d=${p} fill=${c} /></svg
      ></span>`;
    return html`<div class="tbar">
      ${tri("M2 2h2v12H2zM13 2v12L5 8z", "#c8c8c8")} ${tri("M11 2v12L5 8z", "#c8c8c8")}
      ${tri("M5 2v12l6-6z", "#1a50c0")} ${tri("M12 2h2v12h-2zM3 2v12l8-6z", "#1a50c0")}
      <span class="sep ml2 mr2"></span>
      ${tri("M8 2l5 6h-3v6H6V8H3z", "#c8c8c8")} ${tri("M8 14l5-6h-3V2H6v6H3z", "#2a60c8")}
      <span class="sep ml3 mr3"></span>
      ${tool({ label: "插入", ic: "ins", off: true, cls: "mr5" })}
      ${tool({ label: "删除", ic: "del", off: true, cls: "mr2" })}
      ${tool({ label: "缩尺配筋", ic: "scale", cls: "mr3" })}
      ${tool({ label: "钢筋信息", ic: "info", cls: "mr3" })}
      ${tool({ label: "钢筋图库", ic: "lib", cls: "mr5" })}
      ${tool({ label: "其他", ic: "other", arrow: true, cls: "tight mr3" })}
      <span class="tool">关闭</span>
      <span class="sep ml6 mr8"></span>
      <span class="ml2">单构件钢筋总重(kg)：</span><span class="ml5">2560.595</span>
    </div>`;
  }

  private table() {
    return html`<div class="table-box">
      <div class="rb">
        ${HEADS.map((h) => html`<div class="hd">${h}</div>`)}
        ${ROWS.map(
          (r) => html`
            <div class="idx">${r.n}</div>
            <div class="no">${r.no}</div>
            <div class="sym">虫</div>
            <div>${r.fig}</div>
            <div class="shape">
              <svg width="249" height="50" viewBox="0 0 249 50">${r.shape}</svg>
            </div>
            <div class="wrap mid-line">${r.calc.map((l) => html`<span>${l}</span>`)}</div>
            <div class="wrap">${r.desc}</div>
            <div>${r.bend}</div>
            <div>${r.len}</div>
            <div>${r.cnt}</div>
          `
        )}
      </div>
      <div class="tb-v">
        <span class="up">${chevron("up")}</span>
        <div class="thumb"></div>
        <span class="dn">${chevron("down")}</span>
      </div>
    </div>`;
  }

  private section() {
    const dashV = [180, 265, 345, 450, 550, 650, 740];
    const dashH = [450, 515, 590, 650, 733, 820, 905, 1010];
    return html`<svg width="335" height="319" viewBox="63 258 1005 957">
      <g stroke="#555" stroke-width="2" stroke-dasharray="14 10" fill="none">
        ${dashV.map((x) => svg`<path d="M${x} 450V1012"/>`)} ${dashH.map((y) => svg`<path d="M178 ${y}H742"/>`)}
      </g>
      <text x="460" y="472" fill="#555" font-size="30" text-anchor="middle" font-family="Liberation Sans">300</text>
      <text x="462" y="1022" fill="#555" font-size="30" text-anchor="middle" font-family="Liberation Sans">-300</text>
      <circle cx="458" cy="733" r="330" fill="none" stroke="#ddd" stroke-width="6" />
      <circle cx="458" cy="733" r="315" fill="none" stroke="#f00" stroke-width="7" />
      <path
        d="M285 470H640M200 540H715M145 740H770M205 922H705M275 990H640M198 545V920M265 480V985M445 420V1045M648 480V985M717 545V920"
        fill="none"
        stroke="#f00"
        stroke-width="7"
      />
      <path
        d="M465 425L517 475M270 490L328 552M288 478L345 535M205 675L145 735L218 780M175 735L220 695M720 675L770 730M640 865L700 920M660 848L715 900M515 995L465 1040"
        fill="none"
        stroke="#f00"
        stroke-width="7"
      />
      ${DIAMONDS.map(
        ([x, y]) => svg`<path d="M${x} ${y - 10}l10 10-10 10-10-10z" fill="none" stroke="#19c8d8" stroke-width="3"/>`
      )}
      <path d="M458 733H790" stroke="#0f0" stroke-width="5" />
      <path d="M795 733L845 680" stroke="#999" stroke-width="2" />
      <text x="612" y="766" fill="#aaa" font-size="14" font-family="Liberation Sans">600</text>
      <text x="850" y="658" fill="#aaa" font-size="16" font-family="Noto Sans CJK SC">箍筋</text>
      <text x="850" y="680" fill="#aaa" font-size="16" font-family="Noto Sans CJK SC">其它箍筋</text>
      <text x="948" y="657" fill="#0a0" font-size="15" font-family="Liberation Sans">C18@100</text>
      <text x="948" y="680" fill="#0a0" font-size="15" font-family="Liberation Sans">20C32</text>
    </svg>`;
  }

  private propValue(p: Prop) {
    if (p.val && p.val.includes("虫")) {
      const [a, b] = p.val.split("虫");
      return html`${a}<span class="dark">虫</span>${b}`;
    }
    return p.val ?? "";
  }

  private props() {
    return html`<div class="props">
      <div class="pg">
        <div class="hd"></div>
        <div class="hd">属性名称</div>
        <div class="hd val">属性值</div>
        ${PROPS.map((p, i) => {
          const cur = i === 0 ? "cur" : "";
          return html`
            <div class="idx ${cur}">${p.n}</div>
            <div class="nm ${cur} ${p.kind ?? ""} ${p.sub ? "sub" : ""}">
              ${p.expander ? html`<span class="expander">${p.expander}</span>` : nothing}${p.name}
            </div>
            <div class="val ${cur} ${p.kind === "grey" ? "grey" : ""}">${this.propValue(p)}</div>
          `;
        })}
      </div>
      <div class="props-scroll">
        <span class="up">${chevron("up")}</span>
        <div class="thumb"></div>
        <span class="dn">${chevron("down")}</span>
      </div>
    </div>`;
  }

  private arrows() {
    return html`<svg class="arrows" width="1756" height="897" viewBox="0 0 1756 897">
      <g fill="#f4333a">
        <path d="M1309 195L1212 309 1223 316 1192 315 1198 283 1206 297z" />
        <path d="M1403 715L1378 754 1386 758 1363 763 1369 742 1374 748z" />
        <path d="M1443 803L1378 828 1380 838 1364 833 1374 820 1376 825z" />
        <path d="M153 836L257 829 257 823 273 830 257 837 257 834z" />
      </g>
    </svg>`;
  }

  private tray() {
    return html`<svg class="tray" width="256" height="32" viewBox="0 0 256 32">
      <path d="M34 5h222v27H34z" fill="#f6f9fd" />
      <path d="M3 4l27-4 5 26-29 6z" fill="#e8622a" />
      <path
        d="M26 8q-5-3-11-2-5 2-4 5 1 3 7 4 5 1 4 3-1 3-11 0"
        fill="none"
        stroke="#fff"
        stroke-width="4.500"
      />
      <text x="38" y="23" font-size="18" font-weight="700" fill="#1f70b8" font-family="Noto Sans CJK SC">中</text>
      <circle cx="68" cy="14" r="2" fill="none" stroke="#1f70b8" stroke-width="1.500" />
      <path d="M77 17q3 1 0 6" fill="none" stroke="#1f70b8" stroke-width="2.500" />
      <circle cx="103" cy="18" r="9" fill="#fff" stroke="#1f70b8" stroke-width="2" />
      <path d="M98 20q5 5 10 0" fill="none" stroke="#1f70b8" stroke-width="1.500" />
      <path d="M99 14v3M107 14v3" stroke="#1f70b8" stroke-width="1.800" />
      <rect x="128" y="8" width="7" height="13" rx="3.500" fill="#1f70b8" />
      <path d="M125 17q6 9 13 0M131.500 24v4M127 29h9" fill="none" stroke="#1f70b8" stroke-width="1.600" />
      <rect x="149" y="11" width="19" height="14" rx="2" fill="#1f70b8" />
      <path d="M152 15h13M152 19h13M155 22h7" stroke="#fff" stroke-width="1.500" stroke-dasharray="2 1" />
      <circle cx="185" cy="14" r="4" fill="#b8c4d0" />
      <path d="M178 27q1-8 8-8l5 2v6z" fill="#b8c4d0" />
      <rect x="189" y="22" width="6" height="6" fill="#fff" stroke="#98a8b8" />
      <path d="M206 11l5-2h6l5 2 2 5-4 1v9h-12v-9l-4-1z" fill="#1f70b8" />
      <path d="M233 27l10-10a5 5 0 0 1 6-7l-3 3 2 2 3-3a5 5 0 0 1-7 6L236 29z" fill="#1f70b8" />
    </svg>`;
  }

  private gadget() {
    return html`<svg class="gadget" width="11" height="75" viewBox="0 0 11 75">
      ${GADGET_BARS.map((c, i) => svg`<path d="M4 ${10 + i * 3.7}h6" stroke=${c} stroke-width="1.600"/>`)}
    </svg>`;
  }

  render() {
    return html`
      <div class="root">
        <div class="main">
          <div class="left">
            <div class="strip-btn top"></div>
            <div class="strip-btn mid"></div>
            <div class="strip-fill"></div>
            <div class="strip-white"><i class="tick"></i></div>
            <div class="strip-btn"></div>
            <div class="strip-btn"></div>
          </div>
          <div class="treecol">
            <div class="treebar">
              <svg width="22" height="22" viewBox="0 0 22 22">
                <path d="M5 0h4v3h3v4H9v3H5V7H2V3h3z" fill="#f4d040" />
                <rect x="8" y="9" width="13" height="12" fill="#dfe8f6" stroke="#6488c0" />
                <path d="M8 13h13M14 13v8" stroke="#6488c0" />
              </svg>
              <span>新建</span><i class="caret"></i>
              <svg class="ml6" width="18" height="18" viewBox="0 0 18 18">
                <path d="M2 1l14 16M16 1L2 17" stroke="#444" stroke-width="2.500" />
              </svg>
              <svg class="ml6" width="20" height="20" viewBox="0 0 20 20">
                <rect x="2" y="0" width="10" height="13" fill="#f2f6fc" stroke="#6488c0" />
                <rect x="8" y="6" width="10" height="12" fill="#cfe0f4" stroke="#4878b8" />
              </svg>
            </div>
            <div class="search">
              <div class="searchbox">搜索构件...</div>
              <div class="go">
                <svg width="20" height="20" viewBox="0 0 20 20">
                  <circle cx="11" cy="8" r="5.500" fill="none" stroke="#3a98e0" stroke-width="2.500" />
                  <path d="M7 12l-5 6" stroke="#3a98e0" stroke-width="3" />
                </svg>
              </div>
            </div>
            <div class="tree">
              <div class="tree-head">
                <svg width="12" height="12" viewBox="0 0 12 12">
                  <path d="M1 3l5 5 5-5" fill="none" stroke="#555" stroke-width="2" />
                </svg>
                <span class="dots"></span>
                <svg width="18" height="22" viewBox="0 0 18 22">
                  <path d="M1 1h16v4h-5v16H6V5H1z" fill="#bfe0f8" stroke="#1a60c0" stroke-width="1.400" />
                </svg>
                <span class="name">框柱</span>
              </div>
              ${["KZ1", "KZ3", "KZ4", "KZ7"].map(
                (k, i) => html`<div class="tree-item">
                  <span class="leaf ${i === 0 ? "sel" : ""}">
                    <svg width="16" height="16" viewBox="0 0 16 16">
                      <path d="M8 1v14M1 8h14M3 3l10 10M13 3L3 13" stroke="#222" stroke-width="1.500" />
                      <circle cx="8" cy="8" r="5.500" fill="#f0e000" stroke="#333" />
                      <circle cx="8" cy="8" r="1.800" fill="#333" />
                    </svg>
                    ${k}
                  </span>
                </div>`
              )}
            </div>
          </div>
          <div class="centre">
            ${this.bars()}
            <div class="canvas">${this.plan()} ${this.dialog()}</div>
            ${this.snapbar()}
            <div class="lower">
              <div class="gutter">
                <svg class="closer" width="13" height="13" viewBox="0 0 13 13">
                  <rect x=".5" y=".5" width="12" height="12" fill="#eee" stroke="#777" />
                  <path d="M.5 .5h12" stroke="#c05050" stroke-width="2" />
                  <path d="M3 3l7 7M10 3l-7 7" stroke="#555" stroke-width="1.400" />
                </svg>
              </div>
              <div class="grid-wrap">
                ${this.tablebar()} ${this.table()}
                <div class="tb-h">
                  ${chevron("left")}
                  <div class="thumb"></div>
                  ${chevron("right")}
                </div>
              </div>
            </div>
          </div>
          <div class="right">
            ${this.props()}
            <div class="rebar">
              <div class="rebar-row tabs">
                <span class="grip"></span><span>布角筋</span><span>布边筋</span><span>特殊布筋</span><span>对齐钢筋</span>
              </div>
              <span class="more">»</span>
              <div class="rebar-row info">
                <span class="grip"></span><span class="grey">钢筋信息</span>
                <span class="picker"><i class="caret"></i></span>
              </div>
              <div class="rebar-view">${this.section()}</div>
            </div>
            <div class="coords">
              <div class="c1">坐标 (X: 0 Y: 0)</div>
              <div class="c2"></div>
            </div>
          </div>
        </div>
        <div class="status">
          <span class="c0"></span>
          <span class="c1">层高:13.7m</span>
          <span class="c2">底标高:6.2m</span>
          <span class="c3">1(25)</span>
          <span class="c4">按鼠标左键选择一个图元，按右键中止或ESC取消</span>
        </div>
      </div>
      ${this.gadget()} ${this.tray()} ${this.arrows()}
    `;
  }
}
